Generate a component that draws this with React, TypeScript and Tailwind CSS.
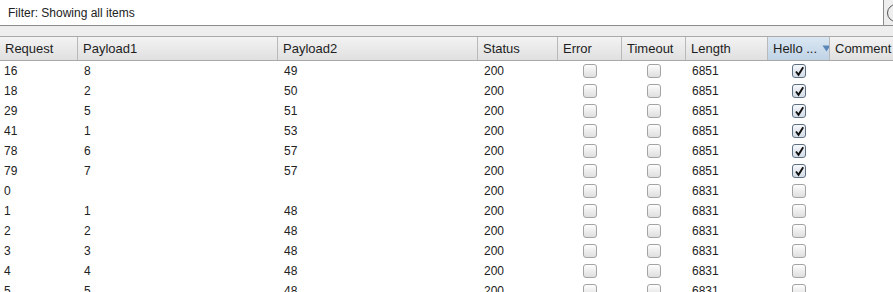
import React from 'react';

type Row = {
  req: string;
  p1: string;
  p2: string;
  status: string;
  length: string;
  hello: boolean;
};

const rows: Row[] = [
  { req: '16', p1: '8', p2: '49', status: '200', length: '6851', hello: true },
  { req: '18', p1: '2', p2: '50', status: '200', length: '6851', hello: true },
  { req: '29', p1: '5', p2: '51', status: '200', length: '6851', hello: true },
  { req: '41', p1: '1', p2: '53', status: '200', length: '6851', hello: true },
  { req: '78', p1: '6', p2: '57', status: '200', length: '6851', hello: true },
  { req: '79', p1: '7', p2: '57', status: '200', length: '6851', hello: true },
  { req: '0', p1: '', p2: '', status: '200', length: '6831', hello: false },
  { req: '1', p1: '1', p2: '48', status: '200', length: '6831', hello: false },
  { req: '2', p1: '2', p2: '48', status: '200', length: '6831', hello: false },
  { req: '3', p1: '3', p2: '48', status: '200', length: '6831', hello: false },
  { req: '4', p1: '4', p2: '48', status: '200', length: '6831', hello: false },
  { req: '5', p1: '5', p2: '48', status: '200', length: '6831', hello: false },
];

const Check: React.FC<{ checked?: boolean }> = ({ checked }) => (
  <div
    className={
      'w-[14px] h-[14px] rounded-[3px] border flex items-center justify-center ' +
      (checked
        ? 'border-[#5f6f82] bg-gradient-to-b from-[#f6f8fb] to-[#d3dce6]'
        : 'border-[#a3a3a3] bg-gradient-to-b from-[#fdfdfd] to-[#dedede]')
    }
  >
    {checked && (
      <svg width="11" height="11" viewBox="0 0 11 11">
        <path d="M2 5.5 L4.5 8.8 L9.2 1.2" fill="none" stroke="#111" strokeWidth={1.9} strokeLinejoin="miter" />
      </svg>
    )}
  </div>
);

const HeadCell: React.FC<{ w: string; children: React.ReactNode; active?: boolean }> = ({ w, children, active }) => (
  <div
    className={
      w +
      ' shrink-0 h-full flex items-center pl-[5px] border-r border-[#b9b9b9] whitespace-nowrap overflow-hidden ' +
      (active
        ? 'bg-gradient-to-b from-[#dbe7f2] to-[#bfd3e6]'
        : 'bg-gradient-to-b from-[#f3f3f3] to-[#e0e0e0]')
    }
  >
    {children}
  </div>
);

export default function App() {
  return (
    <div
      className="w-[893px] h-[292px] overflow-hidden bg-[#eeeeee] text-[12px] text-[#222]"
      style={{ fontFamily: '"Liberation Sans", Arial, sans-serif' }}
    >
      {/* filter bar */}
      <div className="h-[26px] flex bg-white overflow-hidden">
        <div className="w-[884px] shrink-0 h-full border-r border-b border-[#8c8c8c] flex items-center pl-[8px] text-[#222]">
          Filter: Showing all items
        </div>
        <div className="flex-1 h-full border-b border-[#8c8c8c] bg-[#eeeeee] flex items-center pl-[3px]">
          <div className="w-[18px] h-[18px] rounded-full border border-[#555] shrink-0" />
        </div>
      </div>

      <div className="h-[10px]" />

      {/* table */}
      <div className="bg-white">
        <div className="h-[25px] flex border-t border-b border-[#a9a9a9] text-[13px] text-[#1e1e1e]">
          <HeadCell w="w-[78px]">Request</HeadCell>
          <HeadCell w="w-[200px]">Payload1</HeadCell>
          <HeadCell w="w-[200px]">Payload2</HeadCell>
          <HeadCell w="w-[80px]">Status</HeadCell>
          <HeadCell w="w-[64px]">Error</HeadCell>
          <HeadCell w="w-[64px]">Timeout</HeadCell>
          <HeadCell w="w-[82px]">Length</HeadCell>
          <HeadCell w="w-[62px]" active>
            <span>Hello ...</span>
            <svg width="9" height="7" viewBox="0 0 9 7" className="ml-[5px] shrink-0">
              <path d="M0.5 0.5 H8.5 L4.5 6.5 Z" fill="#5b86b8" />
            </svg>
          </HeadCell>
          <HeadCell w="w-[70px]">Comment</HeadCell>
        </div>

        {rows.map((r, i) => (
          <div key={i} className="h-[20px] flex items-center">
            <div className="w-[78px] shrink-0 pl-[4px]">{r.req}</div>
            <div className="w-[200px] shrink-0 pl-[6px]">{r.p1}</div>
            <div className="w-[200px] shrink-0 pl-[6px]">{r.p2}</div>
            <div className="w-[80px] shrink-0 pl-[6px]">{r.status}</div>
            <div className="w-[64px] shrink-0 flex justify-center">
              <Check />
            </div>
            <div className="w-[64px] shrink-0 flex justify-center">
              <Check />
            </div>
            <div className="w-[82px] shrink-0 pl-[6px]">{r.length}</div>
            <div className="w-[62px] shrink-0 flex justify-center">
              <Check checked={r.hello} />
            </div>
            <div className="flex-1" />
          </div>
        ))}
      </div>
    </div>
  );
}
